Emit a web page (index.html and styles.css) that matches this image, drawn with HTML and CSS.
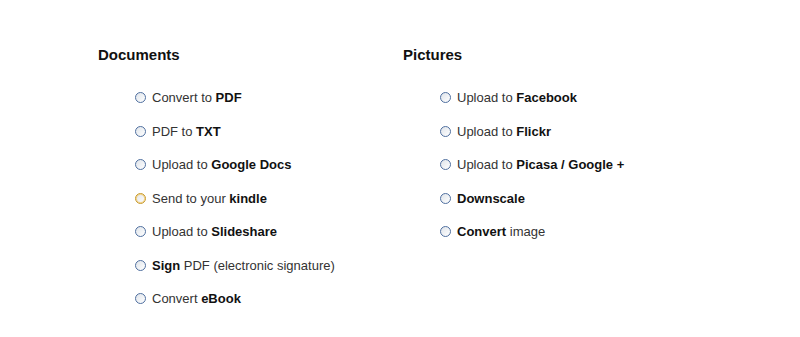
FILE: index.html
```html
<!DOCTYPE html>
<html lang="en">
<head>
    <meta charset="UTF-8">
    <title>Services</title>
    <link rel="stylesheet" href="styles.css">
</head>
<body>
    <div class="services">
        <!-- Documents -->
        <div class="group">
            <h2>Documents</h2>
            <ul class="options">
                <li><span class="radio"></span><span>Convert to <b>PDF</b></span></li>
                <li><span class="radio"></span><span>PDF to <b>TXT</b></span></li>
                <li><span class="radio"></span><span>Upload to <b>Google Docs</b></span></li>
                <li><span class="radio hover"></span><span>Send to your <b>kindle</b></span></li>
                <li><span class="radio"></span><span>Upload to <b>Slideshare</b></span></li>
                <li><span class="radio"></span><span><b>Sign</b> PDF (electronic signature)</span></li>
                <li><span class="radio"></span><span>Convert <b>eBook</b></span></li>
            </ul>
        </div>

        <!-- Pictures -->
        <div class="group">
            <h2>Pictures</h2>
            <ul class="options">
                <li><span class="radio"></span><span>Upload to <b>Facebook</b></span></li>
                <li><span class="radio"></span><span>Upload to <b>Flickr</b></span></li>
                <li><span class="radio"></span><span>Upload to <b>Picasa / Google +</b></span></li>
                <li><span class="radio"></span><span><b>Downscale</b></span></li>
                <li><span class="radio"></span><span><b>Convert</b> image</span></li>
            </ul>
        </div>
    </div>
</body>
</html>
```

FILE: styles.css
```css
body {
    margin: 0;
    padding: 0;
    background: #fff;
    font-family: "Liberation Sans", Arial, sans-serif;
    color: #333;
}

.services {
    display: flex;
    padding: 46px 0 0 98px;
}

.group {
    width: 305px;
}

h2 {
    margin: 0;
    font-size: 15px;
    line-height: 18px;
    font-weight: bold;
    color: #111;
}

.options {
    list-style: none;
    margin: 17px 0 0;
    padding: 0 0 0 37px;
}

.options li {
    display: flex;
    align-items: center;
    height: 33.5px;
    font-size: 13px;
}

.options b {
    color: #111;
}

.radio {
    width: 9px;
    height: 9px;
    margin-right: 6px;
    border: 1px solid #4f6f9f;
    border-radius: 50%;
    background: linear-gradient(135deg, #dfe4ea, #fff);
    flex-shrink: 0;
}

.radio.hover {
    border-color: #c89a2a;
    box-shadow: inset 0 0 0 1px #f5d48a;
}
```
